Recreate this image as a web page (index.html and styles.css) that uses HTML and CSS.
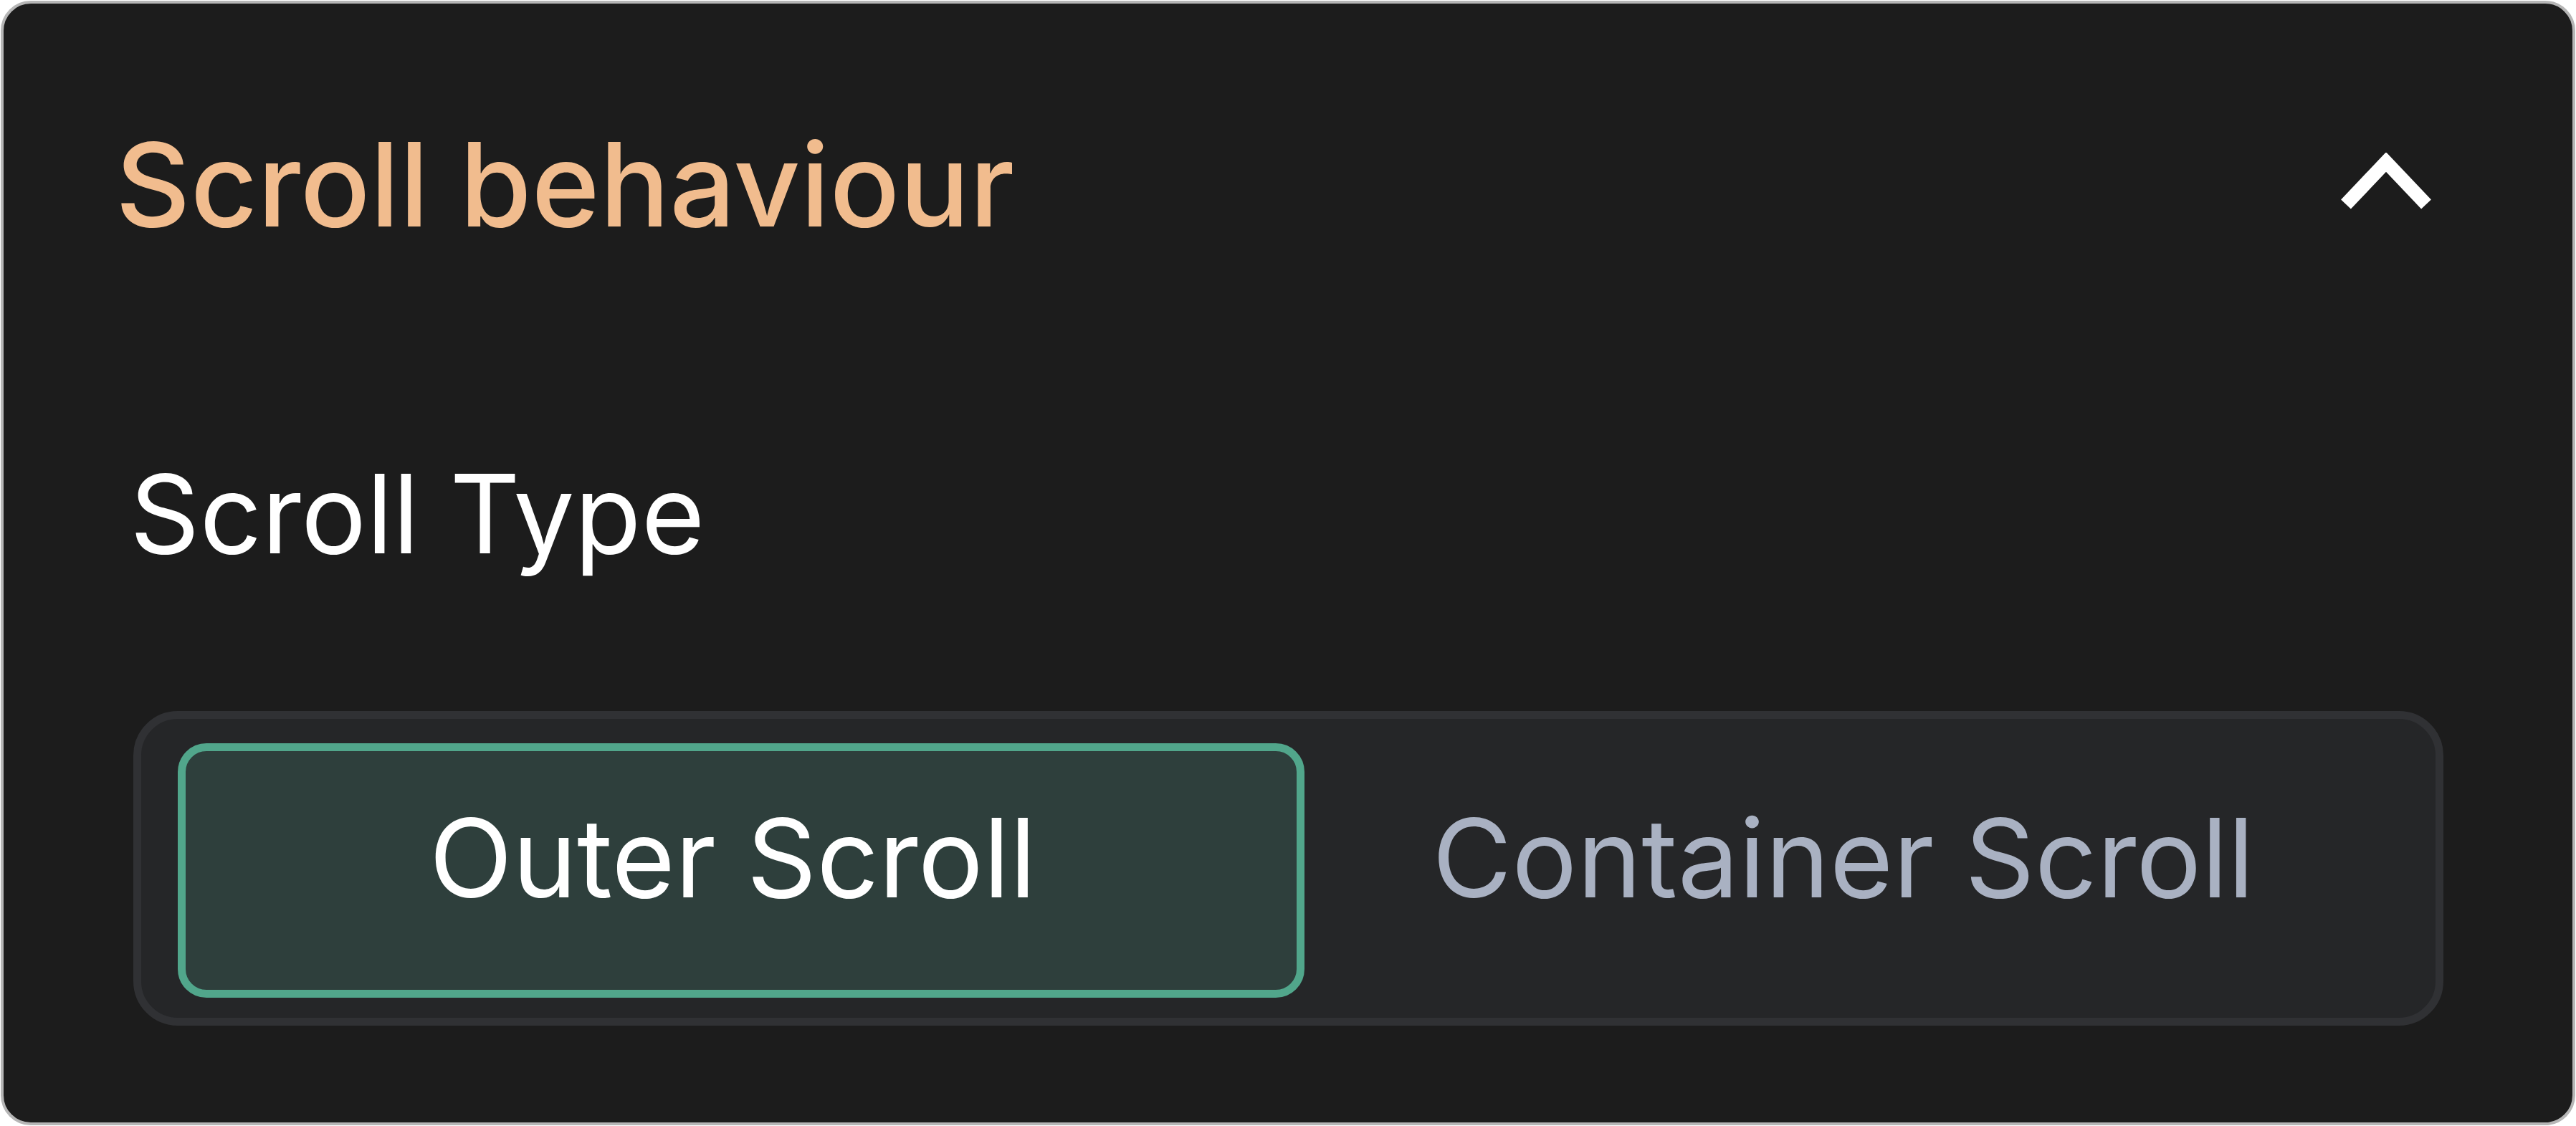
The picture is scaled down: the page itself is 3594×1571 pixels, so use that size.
FILE: index.html
```html
<!DOCTYPE html>
<html lang="en">
<head>
    <meta charset="UTF-8">
    <meta name="viewport" content="width=device-width, initial-scale=1.0">
    <title>Scroll behaviour</title>
    <link rel="stylesheet" href="styles.css">
</head>
<body>

    <div class="panel">
        <div class="panel-header">
            <h2 class="panel-title">Scroll behaviour</h2>
            <svg class="chevron" width="126" height="80" viewBox="0 0 126 80">
                <polyline points="7,72 63,13 119,72" />
            </svg>
        </div>
        <div class="panel-body">
            <div class="field-label">Scroll Type</div>
            <div class="segmented">
                <button class="segment active">Outer Scroll</button>
                <button class="segment">Container Scroll</button>
            </div>
        </div>
    </div>

</body>
</html>
```

FILE: styles.css
```css
html, body {
    margin: 0;
    padding: 0;
    background-color: #ffffff;
}
body {
    font-family: Inter, 'Liberation Sans', sans-serif;
}
.panel {
    box-sizing: border-box;
    margin: 1px;
    height: 1569px;
    background-color: #1c1c1c;
    border: 4px solid #b6b6b6;
    border-radius: 42px;
    padding: 155px 180px 0 156px;
}
.panel-header {
    display: flex;
    justify-content: space-between;
    align-items: center;
    padding-right: 17px;
}
.panel-title {
    margin: 0;
    font-size: 162px;
    line-height: 1.2;
    font-weight: 500;
    color: #f1bc8e;
}
.chevron {
    margin-bottom: 8px;
}
.chevron polyline {
    fill: none;
    stroke: #ffffff;
    stroke-width: 19;
    stroke-linejoin: miter;
}
.panel-body {
    padding: 272px 0 0 25px;
}
.field-label {
    font-size: 152px;
    line-height: 1.2;
    color: #ffffff;
    margin: 0 0 183px -5px;
}
.segmented {
    display: grid;
    grid-template-columns: 1.03fr 1fr;
    background-color: #252628;
    border: 11px solid #303134;
    border-radius: 62px;
    padding: 34px 51px 28px;
}
.segment {
    box-sizing: border-box;
    height: 355px;
    display: flex;
    justify-content: center;
    align-items: center;
    padding: 0 24px 34px 0;
    font-family: Inter, 'Liberation Sans', sans-serif;
    font-size: 152px;
    line-height: 1.2;
    color: #a9b1c2;
    background: transparent;
    border: 11px solid transparent;
    border-radius: 40px;
    cursor: pointer;
}
.segment.active {
    color: #ffffff;
    background-color: #2e3f3c;
    border-color: #51a68b;
}
```
